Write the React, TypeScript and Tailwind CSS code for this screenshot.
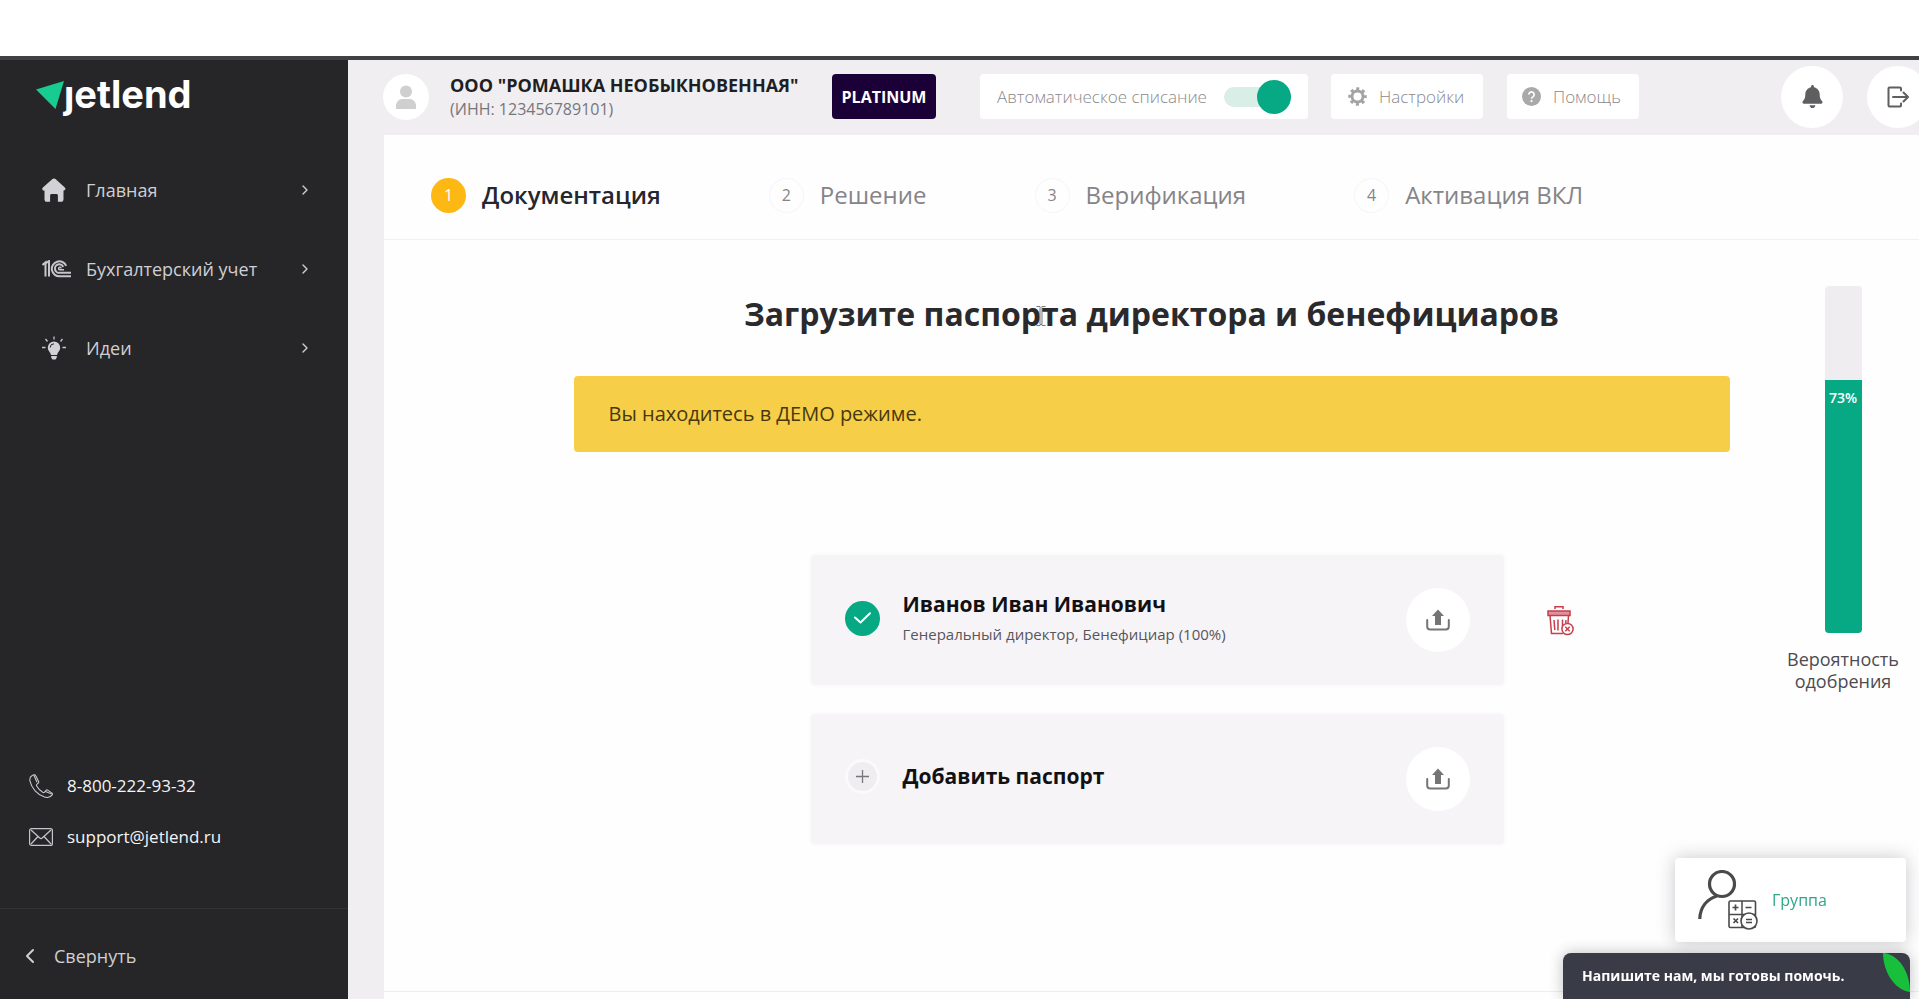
import React from "react";
import { FaBell } from "react-icons/fa";
import { ChevronLeft, ChevronRight } from "lucide-react";

interface NavItem {
  name: string;
  icon: React.ReactNode;
}

const HomeIcon = () => (
  <svg width="24" height="24" viewBox="0 0 24 24" fill="#d2d1d6" aria-hidden="true">
    <path d="M12 0.500c.7 0 1.300.3 1.800.7l9 8.300c1.300 1.200.5 3-1.200 3H21.500v8.700c0 1.700-1 2.600-2.400 2.600h-3.200v-6.300c0-1-.6-1.600-1.600-1.600H9.700c-1 0-1.600.6-1.600 1.600v6.300H4.900c-1.500 0-2.400-.9-2.400-2.600v-8.700H1.900c-1.600 0-2.300-1.800-1-3l9.300-8.300c.5-.4 1.100-.7 1.800-.7z" />
  </svg>
);

const AccountingIcon = () => (
  <svg width="29" height="18" viewBox="0 0 29 18" fill="none" stroke="#c6c5ca" strokeWidth="2" aria-hidden="true">
    <path d="M0.500 5L3.500 2.500V16.500M7 16.500V1L3.500 3.500" />
    <path d="M24.200 5.800A7.500 7.500 0 1 0 18 16.300H29" />
    <path d="M21.200 6.800A4.300 4.300 0 1 0 18 12.800H29" />
    <path d="M19.200 8.300A1.300 1.300 0 1 0 18 9.800H22" strokeWidth="1.500" />
  </svg>
);

const IdeaIcon = () => (
  <svg width="24" height="24" viewBox="0 0 24 24" aria-hidden="true">
    <path d="M12 5.500a6.200 6.200 0 0 0-6.200 6.200c0 2.700 1.700 3.800 2.500 5.200.4.800.4 1.600.7 2.200h6c.3-.6.3-1.400.7-2.200.8-1.400 2.500-2.500 2.500-5.200A6.200 6.200 0 0 0 12 5.500zM9.200 20h5.600v1.500l-1.200 2h-3.200l-1.200-2z" fill="#d2d1d6" />
    <path d="M12 7.800a3.800 3.800 0 0 0-3.800 3.800" fill="none" stroke="#262628" strokeWidth="1" />
    <path d="M12 0.500v3M3.500 3l2 2.500M20.500 3l-2 2.500M0 11.500h3.500M20.500 11.500H24" stroke="#c6c5ca" strokeWidth="1.300" />
  </svg>
);

const PhoneIcon = () => (
  <svg width="24" height="24" viewBox="0 0 24 24" fill="none" stroke="#c6c5ca" strokeWidth="1.100" strokeLinejoin="round" aria-hidden="true">
    <path d="M3.200 1.500C1.300 2.500.5 4.800 1 7.200c1.500 7 7.300 13.500 14.500 15.800 2.700.9 5.900.1 7.700-2.200.4-.6.4-1.200-.2-1.700l-4.300-3c-.6-.4-1.200-.3-1.600.2l-1.500 1.800c-.5.500-1.200.6-1.900.2-2.600-1.600-4.600-3.800-6-6.300-.4-.7-.3-1.300.3-1.800l1.300-1.200c.5-.5.6-1 .3-1.600L6.900 1.900C6.500 1 5.900.6 5 .8z" />
    <path d="M4.800 1l3.200 7.300M15.800 17.300l7 2.800" />
  </svg>
);

const MailIcon = () => (
  <svg width="24" height="18" viewBox="0 0 24 18" fill="none" stroke="#c6c5ca" strokeWidth="1.200" aria-hidden="true">
    <rect x="0.600" y="0.600" width="22.800" height="16.800" rx="2" />
    <path d="M2 2l8.800 8c.7.600 1.700.6 2.400 0L22 2M2 16l7-7.500M22 16l-7-7.500" />
  </svg>
);

const GearIcon = () => (
  <svg width="19" height="19" viewBox="0 0 20 20" fill="none" stroke="#a3a3a3" aria-hidden="true">
    <circle cx="10" cy="10" r="5.800" strokeWidth="3" />
    <circle cx="10" cy="10" r="8.200" strokeWidth="3" strokeDasharray="3.220 3.220" strokeDashoffset="1.610" />
  </svg>
);

const HelpIcon = () => (
  <svg width="19" height="19" viewBox="0 0 20 20" fill="none" aria-hidden="true">
    <circle cx="10" cy="10" r="10" fill="#a9a9a9" />
    <path d="M7.200 8a2.800 2.800 0 1 1 4.300 2.400c-1 .6-1.500 1-1.500 2" stroke="#fff" strokeWidth="1.800" />
    <circle cx="10" cy="14.800" r="1.200" fill="#fff" />
  </svg>
);

const LogoutIcon = () => (
  <svg width="22" height="22" viewBox="0 0 22 22" fill="none" stroke="#5f5f62" strokeWidth="2" strokeLinecap="round" strokeLinejoin="round" aria-hidden="true">
    <path d="M14 4.500V2.500a1 1 0 0 0-1-1H2.500a1 1 0 0 0-1 1v17a1 1 0 0 0 1 1H13a1 1 0 0 0 1-1v-2" />
    <path d="M6 11h14.500M16.500 6.500L21 11l-4.500 4.500" />
  </svg>
);

const UploadIcon = () => (
  <svg width="24" height="22" viewBox="0 0 24 22" aria-hidden="true">
    <path d="M12 0.500l6 6.500h-3v9H9V7H6z" fill="#757477" />
    <path d="M1.200 11v6.500a3 3 0 0 0 3 3h15.600a3 3 0 0 0 3-3V11" fill="none" stroke="#757477" strokeWidth="2" strokeLinecap="round" />
  </svg>
);

const TrashIcon = () => (
  <svg width="27" height="31" viewBox="0 0 27 31" fill="none" stroke="#c53f4c" strokeWidth="1.500" aria-hidden="true">
    <path d="M8 4V1.700h8V4" />
    <rect x="1" y="6" width="22" height="4.500" fill="#e2909a" />
    <path d="M3 10.500L4.500 28.500H16M21.500 10.500L21 18" />
    <path d="M7 15l.8 10M11 14.500V25.500M15.500 14.500V21M19 15l-.3 3" />
    <circle cx="20.500" cy="24" r="5.600" fill="#fff" />
    <path d="M18.300 21.800l4.400 4.400M22.700 21.800l-4.400 4.400" />
  </svg>
);

const GroupIcon = () => (
  <svg width="60" height="60" viewBox="0 0 60 60" fill="none" stroke="#4a4a4c" aria-hidden="true">
    <circle cx="24" cy="14" r="12.500" strokeWidth="3.200" />
    <path d="M19 26C9 29 2 37 1.800 49" strokeWidth="3.200" />
    <rect x="31" y="31" width="26.500" height="26.500" rx="1.500" strokeWidth="1.600" fill="#fff" />
    <path d="M44 31v26.500M31 44.500h26.500" strokeWidth="1.500" />
    <path d="M34.500 37.500h6M37.500 34.500v6M47.500 37.500h6M35.500 48.500l4.500 4.500M40 48.500l-4.500 4.500" strokeWidth="1.700" />
    <circle cx="51" cy="51" r="8" strokeWidth="1.600" fill="#fff" />
    <path d="M48 49.500h6M48 52.500h6" strokeWidth="1.400" />
  </svg>
);

const navItems: NavItem[] = [
  { name: "Главная", icon: <HomeIcon /> },
  { name: "Бухгалтерский учет", icon: <AccountingIcon /> },
  { name: "Идеи", icon: <IdeaIcon /> },
];

const steps = ["Документация", "Решение", "Верификация", "Активация ВКЛ"];

const Sidebar = () => (
  <aside className="flex w-[348px] shrink-0 flex-col bg-[#262628] text-[#d0cfd3]">
    <a href="#" aria-label="jetlend" className="ml-9 mt-[14px] flex h-12 items-start text-white">
      <svg width="28" height="28" viewBox="0 0 28 28" className="mt-[7px]" aria-hidden="true">
        <path d="M0 8.500L28 0L19.500 28z" fill="#17cb91" />
      </svg>
      <span className="font-['Inter'] text-[38px] leading-10 font-bold">ȷetlend</span>
    </a>
    <nav className="mt-7">
      <ul>
        {navItems.map((item) => (
          <li key={item.name}>
            <a href="#" className="flex h-[79px] items-center pr-[35px] pl-[42px] text-lg">
              <span className="w-11 shrink-0">{item.icon}</span>
              <span className="grow">{item.name}</span>
              <ChevronRight size={16} />
            </a>
          </li>
        ))}
      </ul>
    </nav>
    <div className="mt-auto flex flex-col gap-[23px] pl-[29px] text-[17px] leading-7 text-[#f4f4f6]">
      <a href="tel:88002229332" className="flex items-center gap-[14px]">
        <PhoneIcon />
        8-800-222-93-32
      </a>
      <a href="mailto:support@jetlend.ru" className="flex items-center gap-[14px]">
        <MailIcon />
        support@jetlend.ru
      </a>
    </div>
    <button className="mt-[57px] flex h-[91px] items-center gap-3 border-t border-[#323235] pt-1 pl-[18px] text-lg">
      <ChevronLeft size={24} />
      Свернуть
    </button>
  </aside>
);

const Header = () => (
  <header className="flex h-[75px] items-center overflow-hidden pb-0.5 pl-[35px] text-[#8a898c]">
    <div className="flex size-[46px] shrink-0 items-center justify-center rounded-full bg-white">
      <svg width="20" height="24" viewBox="0 0 20 24" fill="#cfcfcf" aria-hidden="true">
        <circle cx="10" cy="6.500" r="6" />
        <path d="M0 24v-3c0-4 3-7 6-7h8c3 0 6 3 6 7v3z" />
      </svg>
    </div>
    <div className="ml-[21px] w-[358px] shrink-0">
      <p className="text-lg leading-6 font-bold text-[#1f1f22]">ООО "РОМАШКА НЕОБЫКНОВЕННАЯ"</p>
      <p className="text-base leading-6 text-[#77767a]">(ИНН: 123456789101)</p>
    </div>
    <div className="ml-6 flex h-[45px] w-[104px] shrink-0 items-center justify-center rounded bg-[#1b0038] text-base font-bold text-white">
      PLATINUM
    </div>
    <label className="ml-11 flex h-[45px] w-[328px] shrink-0 items-center justify-between rounded bg-white pr-[17px] pl-[17px] text-[17px] font-light">
      Автоматическое списание
      <input
        type="checkbox"
        defaultChecked
        className="relative h-5 w-[67px] appearance-none rounded-full bg-[#d9eee7] before:absolute before:-top-[7px] before:right-0 before:size-[34px] before:rounded-full before:bg-[#06a983]"
      />
    </label>
    <button className="ml-[23px] flex h-[45px] w-[152px] shrink-0 items-center gap-3 rounded bg-white pl-[17px] text-[17px] font-light">
      <GearIcon />
      Настройки
    </button>
    <button className="ml-6 flex h-[45px] w-[132px] shrink-0 items-center gap-3 rounded bg-white pl-[15px] text-[17px] font-light">
      <HelpIcon />
      Помощь
    </button>
    <div className="-mr-[10px] ml-auto flex shrink-0 gap-6">
      <button aria-label="Уведомления" className="flex size-[62px] items-center justify-center rounded-full bg-white">
        <FaBell size={23} color="#5f5f62" />
      </button>
      <button aria-label="Выход" className="flex size-[62px] items-center justify-center rounded-full bg-white">
        <LogoutIcon />
      </button>
    </div>
  </header>
);

const Steps = () => (
  <ol className="flex h-[105px] items-center gap-[108px] border-b border-[#f1f0f2] pt-4 pl-[47px]">
    {steps.map((step, index) => (
      <li key={step} className="flex items-center gap-4">
        <span
          className={
            index === 0
              ? "flex size-[35px] items-center justify-center rounded-full bg-[#fdb813] text-base text-white"
              : "flex size-[35px] items-center justify-center rounded-full border border-[#f6f5f7] text-base text-[#858488]"
          }
        >
          {index + 1}
        </span>
        <span className={index === 0 ? "text-2xl font-semibold text-[#26262e]" : "text-2xl text-[#858488]"}>{step}</span>
      </li>
    ))}
  </ol>
);

const UploadButton = () => (
  <button aria-label="Загрузить" className="ml-auto flex size-16 items-center justify-center rounded-full bg-white">
    <UploadIcon />
  </button>
);

const Passports = () => (
  <ul className="mt-[103px] flex flex-col gap-[29px] pl-[237px]">
    <li className="flex items-center gap-[43px]">
      <div className="flex h-[130px] w-[693px] items-center rounded bg-[#f6f4f7] px-[34px] shadow-[0_0_4px_#f6f4f7]">
        <div className="flex items-center gap-[23px] pb-1">
          <span className="flex size-[35px] items-center justify-center rounded-full bg-[#06a983]">
            <svg width="17" height="12" viewBox="0 0 17 12" fill="none" stroke="#fff" strokeWidth="2" strokeLinecap="round" strokeLinejoin="round" aria-hidden="true">
              <path d="M1 5.500l5.500 5L16 1.200" />
            </svg>
          </span>
          <div>
            <p className="text-[21px] leading-8 font-bold text-[#111113]">Иванов Иван Иванович</p>
            <p className="text-[15px] leading-7 text-[#57565b]">Генеральный директор, Бенефициар (100%)</p>
          </div>
        </div>
        <UploadButton />
      </div>
      <button aria-label="Удалить">
        <TrashIcon />
      </button>
    </li>
    <li className="flex h-[130px] w-[693px] items-center rounded bg-[#f6f4f7] px-[34px] shadow-[0_0_4px_#f6f4f7]">
      <div className="flex items-center gap-[23px] pb-[6px]">
        <span className="flex size-[35px] items-center justify-center rounded-full border-3 border-[#faf9fb] bg-[#efedf0]">
          <svg width="13" height="13" viewBox="0 0 13 13" stroke="#77767a" strokeWidth="1.300" aria-hidden="true">
            <path d="M6.500 0v13M0 6.500h13" />
          </svg>
        </span>
        <p className="text-[21px] leading-8 font-bold text-[#111113]">Добавить паспорт</p>
      </div>
      <UploadButton />
    </li>
  </ul>
);

const ApprovalGauge = ({ percent }: { percent: number }) => (
  <div className="mt-[46px] flex w-[116px] flex-col items-center justify-self-end">
    <div className="flex h-[347px] w-[37px] flex-col justify-end overflow-hidden rounded bg-[#efedf0]">
      <div className="bg-[#06a983] pt-2 text-center text-sm font-semibold text-white" style={{ height: `${percent}%` }}>
        {percent}%
      </div>
    </div>
    <p className="mt-[15px] text-center text-lg leading-[22px] text-[#4c4b50]">Вероятность одобрения</p>
  </div>
);

const Widgets = () => (
  <div className="fixed right-[9px] bottom-0 flex flex-col items-end gap-[11px]">
    <a
      href="#"
      className="mr-1 flex h-[84px] w-[231px] items-center gap-[14px] rounded bg-white pl-[23px] text-base text-[#2ba888] shadow-[0_0_18px_rgba(40,35,50,0.25)]"
    >
      <GroupIcon />
      Группа
    </a>
    <button className="relative h-[46px] w-[347px] overflow-hidden rounded-t-lg bg-[#393b47] pl-[19px] text-left text-sm font-bold text-white shadow-[0_0_14px_rgba(40,35,50,0.3)]">
      Напишите нам, мы готовы помочь.
      <svg width="27" height="39" viewBox="0 0 27 39" className="absolute top-0 right-0" aria-hidden="true">
        <path d="M0 0C15 1 27 18 27 39C11 37 0 18 0 0z" fill="#17bf3a" />
      </svg>
    </button>
  </div>
);

const App: React.FC = () => {
  return (
    <div className="flex min-h-screen flex-col bg-white font-['Open_Sans','Noto_Sans',sans-serif]">
      <div className="h-14" />
      <div className="h-1 bg-[#414044]" />
      <div className="flex grow">
        <Sidebar />
        <div className="flex min-w-0 grow flex-col bg-[#f0eef1]">
          <Header />
          <main className="ml-9 flex grow flex-col bg-[#fefefe]">
            <Steps />
            <section className="grid grow grid-cols-[1fr_minmax(0,1156px)_1fr] items-start">
              <div />
              <div>
                <h1 className="relative mt-[50px] text-center text-[32px] leading-12 font-bold text-[#2a2a2d]">
                  Загрузите паспорта директора и бенефициаров
                  <svg width="10" height="20" viewBox="0 0 10 20" fill="#fff" stroke="#777" strokeWidth="1" className="absolute top-4 left-[462px]" aria-hidden="true">
                    <path d="M0.500 0.500H4L5 1.500L6 0.500H9.500M0.500 19.500H4L5 18.500L6 19.500H9.500M4 1.500V18.500H6V1.500" />
                  </svg>
                </h1>
                <div className="mt-[38px] flex h-[76px] items-center rounded bg-[#f7ce48] pl-[35px] text-xl text-[#46390f]">
                  Вы находитесь в ДЕМО режиме.
                </div>
                <Passports />
              </div>
              <div className="grid pr-[18px]">
                <ApprovalGauge percent={73} />
              </div>
            </section>
            <div className="h-2 border-t border-[#efedf0]" />
          </main>
        </div>
      </div>
      <Widgets />
    </div>
  );
};

export default App;
